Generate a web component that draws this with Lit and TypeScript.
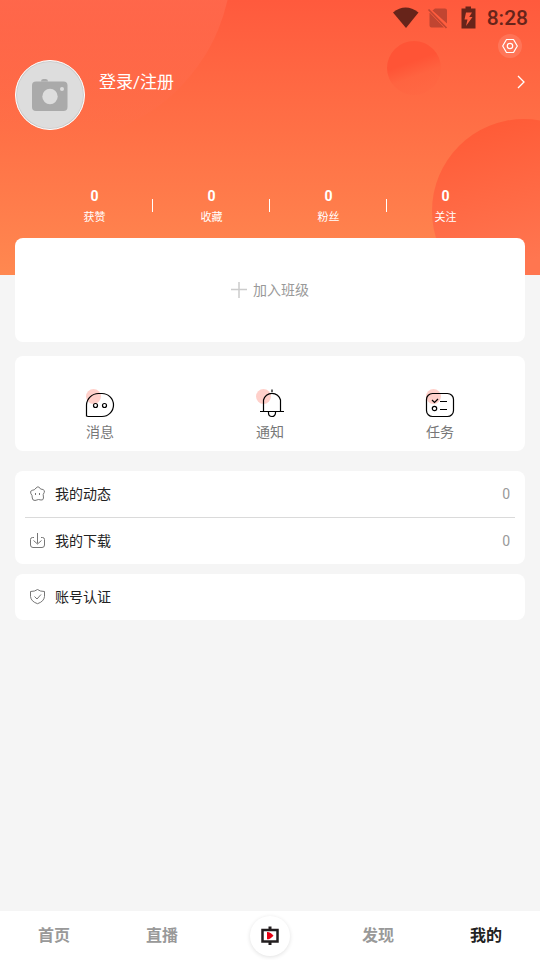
import { LitElement, html, css, svg, TemplateResult } from "lit";
import { customElement, state } from "lit/decorators.js";
import { classMap } from "lit/directives/class-map.js";

const stats = [
  { label: "获赞", value: 0 },
  { label: "收藏", value: 0 },
  { label: "粉丝", value: 0 },
  { label: "关注", value: 0 },
];

const messageIcon = svg`
  <path d="M2.5 28.5V17A12 12 0 0 1 14.5 5.500H18A11.500 11.500 0 0 1 18 28.500H4Q2.500 28.500 2.500 27Z" />
  <circle cx="11.500" cy="17.500" r="2" />
  <circle cx="20.500" cy="17.500" r="2" />`;

const bellIcon = svg`
  <path d="M9.500 23.500V12A8.700 8.500 0 0 1 26.500 12V23.500M6 23.500H30M18 4V1.500" />
  <path d="M14.500 24V25A3.500 3.500 0 0 0 21.500 25V24" />`;

const taskIcon = svg`
  <rect x="2.500" y="5.500" width="27" height="23" rx="6" />
  <path d="M8 12L10.500 14.500L14 11M16 13.500H23M16 21.500H23" />
  <circle cx="10.500" cy="20.500" r="2.200" />`;

const tiles = [
  { label: "消息", icon: messageIcon },
  { label: "通知", icon: bellIcon },
  { label: "任务", icon: taskIcon },
];

const momentsIcon = svg`
  <path d="M6 2Q8-.2 9.500 1.500L10.500 3L13 3.500Q15.300 4.500 14.200 6.500L13.200 8.500L13.500 12Q13.200 14.500 11 14L8.500 13.500L5 14.500Q2.300 14.500 2.300 12L2 9.500L.7 7.200Q0 4.800 2.200 4.300L4.300 3.800Z" />
  <path d="M5.500 7V9M9.500 7V9" />`;

const downloadIcon = svg`
  <path d="M4 4.500H2.500Q.5 4.500 .5 6.500V12Q.5 14.500 3 14.500H12Q14.500 14.500 14.500 12V6.500Q14.500 4.500 12.500 4.500H11" />
  <path d="M7.500 0V10.500M3.500 7.500L7.500 11L11.500 7.500" />`;

const shieldIcon = svg`
  <path d="M7.500 .5Q10 2.500 14.500 2.500V7.500Q14 12.500 7.500 14.700Q1 12.500 .5 7.500V2.500Q5 2.500 7.500 .5Z" />
  <path d="M4.500 7.500L7 10L11 5.500" />`;

const groups: { label: string; value?: number; icon: TemplateResult }[][] = [
  [
    { label: "我的动态", value: 0, icon: momentsIcon },
    { label: "我的下载", value: 0, icon: downloadIcon },
  ],
  [{ label: "账号认证", icon: shieldIcon }],
];

const tabs = ["首页", "直播", "", "发现", "我的"];

@customElement("app-root")
export class AppRoot extends LitElement {
  @state() private active = "我的";

  static styles = css`
    :host {
      display: flex;
      flex-direction: column;
      min-height: 100vh;
      background: #f5f5f5;
      font-family: Roboto, "Noto Sans CJK SC", sans-serif;
      font-size: 14px;
      line-height: 20px;
      color: #222;
    }
    * {
      box-sizing: border-box;
    }
    button {
      border: 0;
      padding: 0;
      margin: 0;
      background: none;
      font: inherit;
      color: inherit;
      cursor: pointer;
    }
    svg {
      display: block;
      fill: none;
      flex: none;
    }
    .header {
      position: relative;
      overflow: hidden;
      padding-bottom: 49px;
      color: #fff;
      background: linear-gradient(#ff5a3d, #ff8850);
    }
    .bubble {
      position: absolute;
      border-radius: 50%;
    }
    .bubble-left {
      left: -132px;
      top: -222px;
      width: 364px;
      height: 364px;
      background: linear-gradient(rgba(255, 112, 84, 0.6) 60%, rgba(255, 112, 72, 0));
    }
    .bubble-small {
      right: 99px;
      top: 41px;
      width: 54px;
      height: 54px;
      background: linear-gradient(160deg, #ff5436 40%, rgba(255, 96, 62, 0.5) 62%, rgba(255, 104, 70, 0.2));
    }
    .bubble-right {
      right: -76px;
      top: 119px;
      width: 184px;
      height: 184px;
      background: linear-gradient(165deg, #ff5c38 10%, #ff7650 72%);
    }
    .status,
    .toolbar,
    .profile,
    .stats {
      position: relative;
      display: flex;
    }
    .status {
      height: 34px;
      padding: 2px 12px 0 0;
      align-items: center;
      justify-content: flex-end;
      color: #67241a;
    }
    .clock {
      margin-left: 10px;
      font-size: 21px;
      font-weight: 500;
    }
    .toolbar {
      justify-content: flex-end;
      padding-right: 18px;
    }
    .settings {
      display: grid;
      place-items: center;
      width: 24px;
      height: 24px;
      border-radius: 50%;
      background: rgba(255, 255, 255, 0.12);
    }
    .profile {
      margin-top: 2px;
      padding: 0 15px;
      gap: 14px;
    }
    .avatar {
      display: grid;
      place-items: center;
      width: 70px;
      height: 70px;
      border: 1px solid #fff;
      border-radius: 50%;
      background: #ddd;
      box-shadow: inset 0 0 0 1px #ccc;
    }
    .login {
      display: flex;
      flex: 1;
      height: 44px;
      align-items: center;
      justify-content: space-between;
      font-size: 17px;
    }
    .stats {
      margin: 58px 36px 0;
    }
    .stat {
      flex: 1;
      display: flex;
      flex-direction: column;
      align-items: center;
      gap: 6px;
      position: relative;
      font-size: 11px;
      line-height: 16px;
    }
    .stat + .stat::before {
      content: "";
      position: absolute;
      left: -1px;
      top: 11px;
      width: 1px;
      height: 13px;
      background: #fff;
    }
    .count {
      font-size: 14px;
      font-weight: 700;
    }
    .content {
      position: relative;
      display: flex;
      flex-direction: column;
      padding: 0 15px 20px;
      margin-top: -37px;
    }
    .card {
      border-radius: 8px;
      background: #fff;
    }
    .join {
      display: flex;
      align-items: center;
      justify-content: center;
      gap: 6px;
      height: 104px;
      color: #999;
    }
    .tiles {
      display: flex;
      margin: 14px 0 10px;
      padding: 32px 0 9px;
    }
    .tile {
      flex: 1;
      display: flex;
      flex-direction: column;
      align-items: center;
      gap: 2px;
      color: #777;
    }
    .group {
      margin-top: 10px;
      padding: 0 10px;
    }
    .row {
      display: flex;
      align-items: center;
      width: 100%;
      height: 46px;
      padding: 0 5px;
      gap: 10px;
      text-align: left;
    }
    .rule {
      height: 1px;
      background: #dadada;
    }
    .row-label {
      flex: 1;
    }
    .row-value {
      color: #999;
    }
    .tabs {
      display: flex;
      height: 49px;
      margin-top: auto;
      background: #fff;
    }
    .tab {
      flex: 1;
      display: grid;
      place-items: center;
      font-size: 16px;
      font-weight: 700;
      color: #999;
    }
    .tab.active {
      color: #222;
    }
    .live {
      display: grid;
      place-items: center;
      width: 40px;
      height: 40px;
      border-radius: 50%;
      background: #fff;
      box-shadow: 0 1px 4px rgba(0, 0, 0, 0.12);
    }
  `;

  private renderStatus() {
    return html`<div class="status">
      <svg width="84" height="24" viewBox="0 0 84 24" fill="none">
        <path d="M0 6.500Q12.500-3.500 25.500 6.500L13 22Z" fill="#67241a" />
        <path d="M42 2.500H52Q54 2.500 54 4.500V17.500L39.500 4.500ZM37 7L51 21.500H38.500Q36.500 21.500 36.500 19.500V7Z" fill="#c14531" />
        <path d="M35.500 3.500L53.500 22" stroke="#c14531" stroke-width="1.700" />
        <path d="M68.500 2.500H72.500V.5H78V2.500H82.500V22.500H68.500ZM73 6.500L71.500 13.500H74.500L73 20L79.500 11H76.200L79 6.500Z" fill="#67241a" fill-rule="evenodd" />
      </svg>
      <span class="clock">8:28</span>
    </div>`;
  }

  private renderHeader() {
    return html`<header class="header">
      <div class="bubble bubble-left"></div>
      <div class="bubble bubble-small"></div>
      <div class="bubble bubble-right"></div>
      ${this.renderStatus()}
      <div class="toolbar">
        <button class="settings" aria-label="设置">
          <svg width="16" height="16" viewBox="0 0 16 16" stroke="#fff" stroke-width="1.200">
            <path d="M4.500 1.500H11.500L15.300 8L11.500 14.500H4.500L.7 8Z" stroke-linejoin="round" />
            <circle cx="8" cy="8" r="2.700" />
          </svg>
        </button>
      </div>
      <div class="profile">
        <button class="avatar" aria-label="头像">
          <svg width="36" height="34" viewBox="0 0 36 34">
            <path d="M9 3.500Q9 1 11 1H14Q16 1 16 3.500Z" fill="#aaa" />
            <rect y="3.500" width="35.500" height="29.500" rx="4" fill="#aaa" />
            <circle cx="18" cy="18.500" r="7.700" fill="#ddd" />
            <circle cx="30" cy="11" r="2" fill="#ddd" />
          </svg>
        </button>
        <button class="login">
          <span>登录/注册</span>
          <svg width="8" height="14" viewBox="0 0 8 14" stroke="#fff" stroke-width="1.300">
            <path d="M1 1L7 7L1 13" />
          </svg>
        </button>
      </div>
      <div class="stats">
        ${stats.map(
          (s) => html`<button class="stat"><span class="count">${s.value}</span><span>${s.label}</span></button>`
        )}
      </div>
    </header>`;
  }

  render() {
    return html`
      ${this.renderHeader()}
      <main class="content">
        <button class="card join">
          <svg width="16" height="16" viewBox="0 0 16 16" stroke="#ccc" stroke-width="1.500">
            <path d="M0 7.500H16M8 0V16" />
          </svg>
          <span>加入班级</span>
        </button>
        <section class="card tiles">
          ${tiles.map(
            (t) => html`<button class="tile">
              <svg width="32" height="32" viewBox="0 0 32 32" stroke="#000" stroke-width="1.200">
                <circle cx="9.500" cy="8.500" r="7.500" fill="#ffd0ca" stroke="none" />
                ${t.icon}
              </svg>
              <span>${t.label}</span>
            </button>`
          )}
        </section>
        ${groups.map(
          (rows) => html`<section class="card group">
            ${rows.map(
              (r, i) => html`${i > 0 ? html`<div class="rule"></div>` : null}
                <button class="row">
                  <svg width="15" height="16" viewBox="0 0 15 16" stroke="#666" stroke-width="0.900">${r.icon}</svg>
                  <span class="row-label">${r.label}</span>
                  <span class="row-value">${r.value}</span>
                </button>`
            )}
          </section>`
        )}
      </main>
      <nav class="tabs">
        ${tabs.map((t) =>
          t
            ? html`<button class=${classMap({ tab: true, active: t === this.active })} @click=${() => (this.active = t)}>
                ${t}
              </button>`
            : html`<button class="tab" aria-label="课堂">
                <span class="live">
                  <svg width="18" height="20" viewBox="0 0 18 20">
                    <path d="M7.500 0.500H10.500V3H7.500ZM7.500 16H10.500V19H7.500Z" fill="#231f20" />
                    <rect x="1.500" y="4" width="15" height="11.500" stroke="#231f20" stroke-width="2.500" />
                    <path d="M6 6Q9 5.500 12.500 9.700Q9 13.500 6 13.300Z" fill="#e60012" />
                  </svg>
                </span>
              </button>`
        )}
      </nav>
    `;
  }
}
